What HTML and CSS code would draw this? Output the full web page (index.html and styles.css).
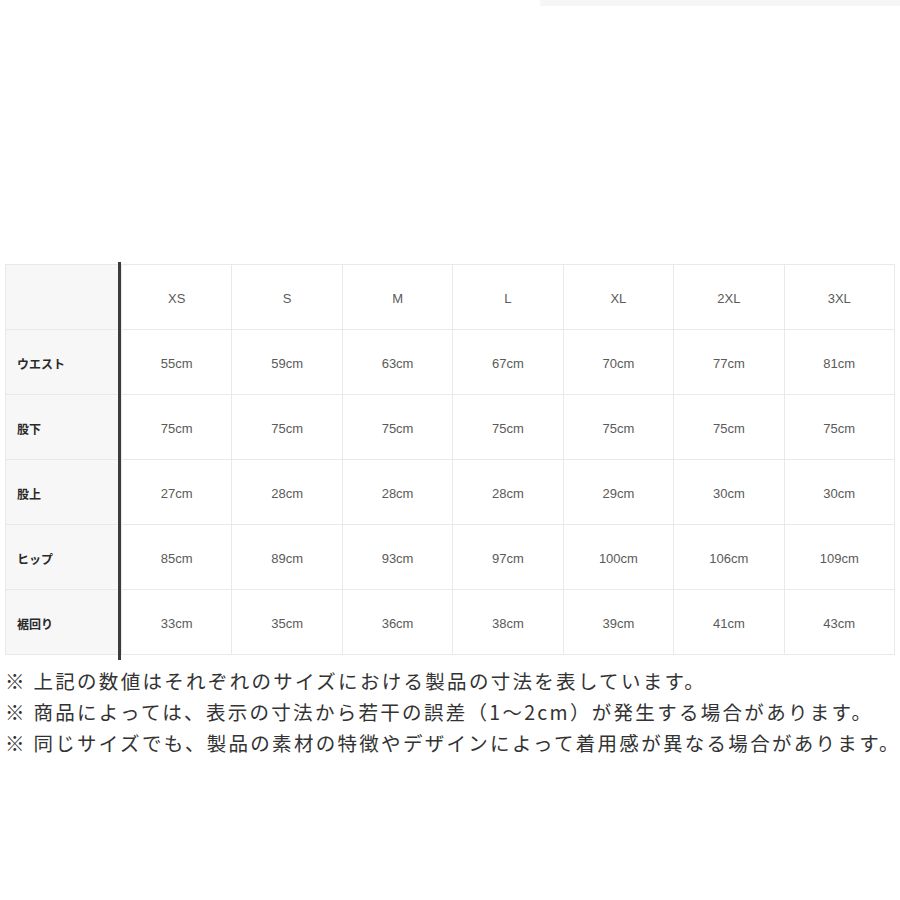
FILE: index.html
```html
<!DOCTYPE html>
<html lang="ja">
<head>
<meta charset="utf-8">
<link rel="stylesheet" href="styles.css">
</head>
<body>
<div class="topstrip"></div>
<div class="page">
  <div class="tablewrap">
  <table class="size">
    <tr>
      <th class="lab"></th>
      <th>XS</th><th>S</th><th>M</th><th>L</th><th>XL</th><th>2XL</th><th>3XL</th>
    </tr>
    <tr>
      <td class="lab">ウエスト</td>
      <td>55cm</td><td>59cm</td><td>63cm</td><td>67cm</td><td>70cm</td><td>77cm</td><td>81cm</td>
    </tr>
    <tr>
      <td class="lab">股下</td>
      <td>75cm</td><td>75cm</td><td>75cm</td><td>75cm</td><td>75cm</td><td>75cm</td><td>75cm</td>
    </tr>
    <tr>
      <td class="lab">股上</td>
      <td>27cm</td><td>28cm</td><td>28cm</td><td>28cm</td><td>29cm</td><td>30cm</td><td>30cm</td>
    </tr>
    <tr>
      <td class="lab">ヒップ</td>
      <td>85cm</td><td>89cm</td><td>93cm</td><td>97cm</td><td>100cm</td><td>106cm</td><td>109cm</td>
    </tr>
    <tr>
      <td class="lab">裾回り</td>
      <td>33cm</td><td>35cm</td><td>36cm</td><td>38cm</td><td>39cm</td><td>41cm</td><td>43cm</td>
    </tr>
  </table>
  </div>
  <div class="notes">
    <p>※ 上記の数値はそれぞれのサイズにおける製品の寸法を表しています。</p>
    <p>※ 商品によっては、表示の寸法から若干の誤差（1～2cm）が発生する場合があります。</p>
    <p>※ 同じサイズでも、製品の素材の特徴やデザインによって着用感が異なる場合があります。</p>
  </div>
</div>
</body>
</html>
```

FILE: styles.css
```css
html, body {
  margin: 0;
  padding: 0;
  background: #ffffff;
}
.topstrip {
  height: 6px;
  margin-left: 540px;
  background: #f6f6f6;
}
.page {
  padding: 258px 0 0 5px;
}
.tablewrap {
  position: relative;
  width: 890px;
}
.tablewrap::after {
  content: "";
  position: absolute;
  left: 113px;
  top: -2px;
  bottom: -5px;
  width: 3px;
  background: #3c3c3c;
}
.size {
  width: 890px;
  border-collapse: collapse;
  table-layout: fixed;
  font-family: "Liberation Sans", "Noto Sans CJK JP", sans-serif;
}
.size th, .size td {
  height: 61px;
  padding: 3px 0 0 0;
  border: 1.5px solid #e9e9e9;
  text-align: center;
  vertical-align: middle;
  font-size: 13px;
  font-weight: normal;
  color: #5a5a5a;
}
.size .lab {
  width: 116px;
  background: #f7f7f7;
  text-align: left;
  padding: 3px 0 0 11px;
  font-family: "Noto Sans CJK JP", sans-serif;
  font-size: 12px;
  font-weight: bold;
  color: #2a2a2a;
  box-sizing: border-box;
}
.notes {
  margin-top: 10px;
  font-family: "Noto Sans CJK JP", sans-serif;
  font-size: 19.5px;
  letter-spacing: 2.3px;
  color: #333333;
}
.notes p {
  margin: 0;
  line-height: 31px;
  white-space: nowrap;
}
```
